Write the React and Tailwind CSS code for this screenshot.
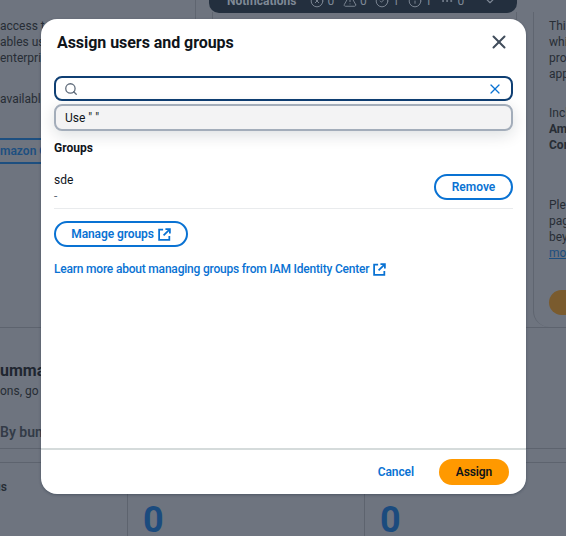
import { useState } from "react";
import { Search, X, CircleX, TriangleAlert, CircleCheck, Info, Ellipsis, ChevronDown } from "lucide-react";

function ExternalIcon() {
  return (
    <svg width="13" height="13" viewBox="0 0 14 14" fill="none" stroke="currentColor" strokeWidth="1.9" className="ml-1 shrink-0">
      <path d="M5.5 1.8H1.2v11h11V8.5" />
      <path d="M8 1.2h4.8V6M12.6 1.4 6 8" />
    </svg>
  );
}

function BackgroundPage() {
  return (
    <div className="flex h-full flex-col text-[12px] leading-[16px] text-[#272d35]">
      <div className="h-[2px] bg-[#1e4f85]" />
      <div className="flex h-[328px] shrink-0 border-b border-[#5d636e]">
        <div className="w-[196px] border-r border-[#5f6570]">
          <div className="mt-[18px] whitespace-nowrap">
            <p>access to</p>
            <p>ables use</p>
            <p>enterprise</p>
            <p className="mt-[25px]">available</p>
          </div>
          <div className="mt-[31px] whitespace-nowrap border-y-2 border-[#1d4f80] py-[3px] font-semibold text-[#1d4f80]">
            mazon Q
          </div>
        </div>
        <div className="ml-[16px] mt-3 w-[305px] border-x border-[#5f6570]" />
        <div className="ml-auto mt-3 w-[33px] overflow-hidden rounded-bl-2xl border-l border-[#5f6570] pl-[15px] pt-[6px] whitespace-nowrap">
          <p>Thi</p>
          <p>whi</p>
          <p>pro</p>
          <p>app</p>
          <p className="mt-[23px]">Incl</p>
          <p className="font-bold">Am</p>
          <p className="font-bold">Cor</p>
          <p className="mt-[44px]">Ple</p>
          <p>pag</p>
          <p>bey</p>
          <p className="text-[#1d4f80] underline">mo</p>
          <div className="mt-[29px] h-[25px] w-[40px] rounded-full bg-[#7a5b2e]" />
        </div>
      </div>
      <div className="mt-[33px] whitespace-nowrap">
        <p className="text-[16px] leading-[20px] font-bold text-[#1f2630]">ummary</p>
        <p className="mt-[2px]">ons, go to</p>
        <p className="mt-[24px] text-[14px] leading-[18px] font-semibold text-[#333b47]">By bundle</p>
      </div>
      <div className="mt-[7px] h-[15px] shrink-0 border-y border-[#5d636e]" />
      <div className="grid flex-1 grid-cols-[127px_237px_1fr]">
        <p className="-ml-[6px] pt-[16px] font-semibold">us</p>
        <div className="border-l border-[#5d636e] pl-[15px] pt-[37px] text-[36px] leading-[40px] font-bold text-[#1b4b7e]">0</div>
        <div className="border-l border-[#5d636e] pl-[15px] pt-[37px] text-[36px] leading-[40px] font-bold text-[#1b4b7e]">0</div>
      </div>
    </div>
  );
}

function NotificationBar() {
  const items = [
    [CircleX, 0],
    [TriangleAlert, 0],
    [CircleCheck, 1],
    [Info, 1],
    [Ellipsis, 0],
  ];
  return (
    <div className="absolute left-[209px] top-0 flex h-[13px] w-[308px] items-end overflow-hidden rounded-b-[10px] bg-[#232f3e] pl-[18px] text-[12px] leading-[16px] text-[#7f8996]">
      <div className="mb-[4px] flex items-center">
        <span className="mr-[14px] font-bold">Notifications</span>
        {items.map(([Icon, n], i) => (
          <span key={i} className="mr-[9px] flex w-[23.5px] items-center gap-[3px]">
            <Icon size={14} strokeWidth={1.6} className="shrink-0" />
            {n}
          </span>
        ))}
        <ChevronDown size={14} className="ml-[10px]" />
      </div>
    </div>
  );
}

export default function App() {
  const [query] = useState("");

  return (
    <div
      className="relative h-[536px] w-[566px] overflow-hidden bg-[#6e747f]"
      style={{ fontFamily: 'Roboto, "Open Sans", sans-serif' }}
    >
      <BackgroundPage />
      <NotificationBar />

      <div className="absolute left-[41px] top-[19px] flex h-[475px] w-[485px] flex-col rounded-2xl bg-white text-[12px] leading-[16px] text-[#0f141a] shadow-[0_1px_3px_rgba(0,20,40,0.3)]">
        <div className="flex items-center justify-between pl-[16px] pr-[16px] pt-[13px]">
          <h2 className="text-[16px] leading-[22px] font-bold tracking-[-0.05px] text-[#0f141a]">Assign users and groups</h2>
          <X size={22} strokeWidth={2.2} className="-mt-[2px] text-[#414d5c]" />
        </div>

        <div className="flex flex-1 flex-col pl-[13px] pr-[13px] pt-[22px]">
          <div className="relative">
            <div className="flex h-[25px] items-center rounded-lg border-2 border-[#0f3f73] pl-[8px] pr-[8px]">
              <Search size={14} strokeWidth={2.2} className="text-[#5f6b7a]" />
              <input value={query} readOnly className="min-w-0 flex-1 outline-none" />
              <X size={16} strokeWidth={1.8} className="text-[#0972d3]" />
            </div>
            <div className="absolute inset-x-0 top-[28px] flex h-[27px] items-center rounded-lg border-2 border-[#a3adba] bg-[#f3f3f4] pl-[9px] shadow-[0_4px_16px_rgba(0,28,36,0.14)]">
              Use " "
            </div>
          </div>

          <h3 className="mt-[39px] font-bold">Groups</h3>

          <div className="mt-[18px] flex items-start justify-between border-b border-[#e9ebed] pb-[4px]">
            <div className="-mt-[2px]">
              <p>sde</p>
              <p className="text-[#5f6b7a]">-</p>
            </div>
            <button className="flex h-[26px] w-[79px] items-center justify-center rounded-full border-2 border-[#0972d3] font-semibold text-[#0972d3]">
              Remove
            </button>
          </div>

          <button className="mt-[12px] flex h-[26px] w-[134px] items-center justify-center rounded-full border-2 border-[#0972d3] font-semibold tracking-[-0.1px] text-[#0972d3]">
            Manage groups
            <ExternalIcon />
          </button>

          <a className="mt-[14px] flex items-center font-medium tracking-[-0.2px] text-[#0972d3]">
            Learn more about managing groups from IAM Identity Center
            <ExternalIcon />
          </a>
        </div>

        <div className="flex h-[46px] items-center justify-end border-t-2 border-[#d5dbdb] pr-[17px]">
          <button className="mr-[25px] font-semibold tracking-[-0.1px] text-[#0972d3]">Cancel</button>
          <button className="flex h-[26px] w-[70px] items-center justify-center rounded-full bg-[#ff9900] font-semibold tracking-[-0.1px] text-[#0f141a]">
            Assign
          </button>
        </div>
      </div>
    </div>
  );
}
